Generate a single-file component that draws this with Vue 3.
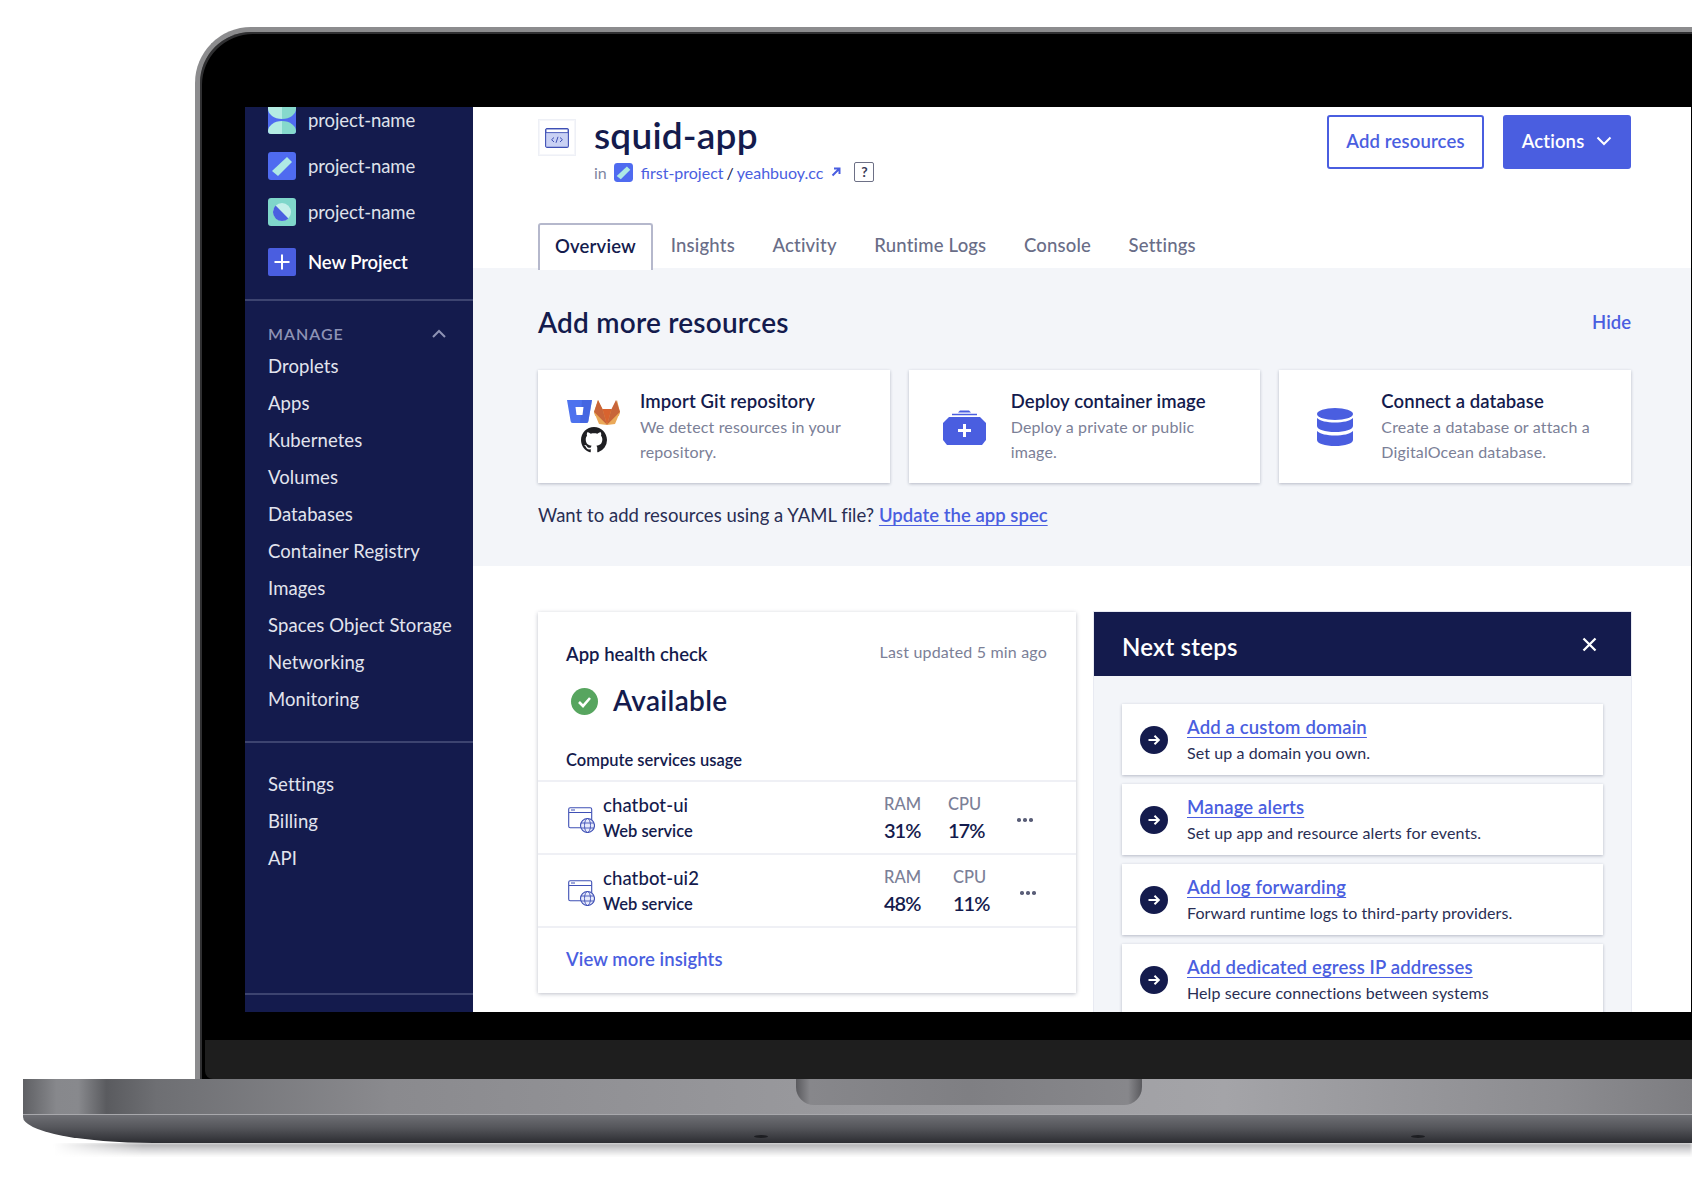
<script setup>
const manage = ['Droplets','Apps','Kubernetes','Volumes','Databases','Container Registry','Images','Spaces Object Storage','Networking','Monitoring']
const account = ['Settings','Billing','API']
const tabs = ['Insights','Activity','Runtime Logs','Console','Settings']
const services = [
  { name:'chatbot-ui', ram:'31%', cpu:'17%', cpuGap:'cpu-a' },
  { name:'chatbot-ui2', ram:'48%', cpu:'11%', cpuGap:'cpu-b' }
]
const steps = [
  { t:'Add a custom domain', d:'Set up a domain you own.' },
  { t:'Manage alerts', d:'Set up app and resource alerts for events.' },
  { t:'Add log forwarding', d:'Forward runtime logs to third-party providers.' },
  { t:'Add dedicated egress IP addresses', d:'Help secure connections between systems' }
]
const github = 'M8 0C3.58 0 0 3.58 0 8c0 3.54 2.29 6.53 5.47 7.59.4.07.55-.17.55-.38 0-.19-.01-.82-.01-1.49-2.01.37-2.53-.49-2.69-.94-.09-.23-.48-.94-.82-1.13-.28-.15-.68-.52-.01-.53.63-.01 1.08.58 1.23.82.72 1.21 1.87.87 2.33.66.07-.52.28-.87.51-1.07-1.78-.2-3.64-.89-3.64-3.95 0-.87.31-1.59.82-2.15-.08-.2-.36-1.02.08-2.12 0 0 .67-.21 2.2.82.64-.18 1.32-.27 2-.27.68 0 1.36.09 2 .27 1.53-1.04 2.2-.82 2.2-.82.44 1.1.16 1.92.08 2.12.51.56.82 1.27.82 2.15 0 3.07-1.87 3.75-3.65 3.95.29.25.54.73.54 1.48 0 1.07-.01 1.93-.01 2.2 0 .21.15.46.55.38A8.013 8.013 0 0016 8c0-4.42-3.58-8-8-8z'
</script>

<template>
  <div class="page">
    <div class="lid">
      <div class="bezel">
        <div class="screen">
          <aside class="sidebar">
            <div class="projects">
              <div class="project">
                <svg class="picon" viewBox="0 0 28 28">
                  <rect width="28" height="28" rx="3" fill="#4f6bf0"/>
                  <path d="M0 0h14v13C6 13 0 8 0 3z" fill="#b4ece3"/>
                  <path d="M14 0h14v3c0 5-6 10-14 10z" fill="#86d9cc"/>
                  <path d="M14 15C6 15 0 20 0 25c0 2 1 3 3 3h11z" fill="#b4ece3"/>
                  <path d="M14 15c8 0 14 5 14 10 0 2-1 3-3 3H14z" fill="#86d9cc"/>
                </svg>
                <span>project-name</span>
              </div>
              <div class="project">
                <svg class="picon" viewBox="0 0 28 28">
                  <rect width="28" height="28" rx="3" fill="#4f6bf0"/>
                  <path d="M19 5l5 5L10 24l-6-5z" fill="#aeeae4"/>
                </svg>
                <span>project-name</span>
              </div>
              <div class="project">
                <svg class="picon" viewBox="0 0 28 28">
                  <rect width="28" height="28" rx="3" fill="#7fd6ca"/>
                  <circle cx="14" cy="14" r="9" fill="#c4efe9"/>
                  <path d="M7.600 7.600A9 9 0 0 0 20.400 20.400z" fill="#4a5fe0"/>
                </svg>
                <span>project-name</span>
              </div>
              <div class="project newp">
                <svg class="picon" viewBox="0 0 28 28">
                  <rect width="28" height="28" rx="2" fill="#4a5ee0"/>
                  <path d="M14 6.5v15M6.5 14h15" stroke="#fff" stroke-width="2"/>
                </svg>
                <span>New Project</span>
              </div>
            </div>
            <div class="sect manage">
              <div class="sect-head">
                <span>MANAGE</span>
                <svg width="16" height="10" viewBox="0 0 16 10"><path d="M2 8l6-6 6 6" fill="none" stroke="#8e93b5" stroke-width="2"/></svg>
              </div>
              <a v-for="m in manage" :key="m" class="nav">{{ m }}</a>
            </div>
            <div class="sect account">
              <a v-for="m in account" :key="m" class="nav">{{ m }}</a>
            </div>
            <div class="sect last"></div>
          </aside>

          <main class="main">
            <section class="top">
              <div class="headrow">
                <div class="appicon">
                  <svg width="24" height="20" viewBox="0 0 24 20">
                    <rect x=".6" y=".6" width="22.8" height="18.8" rx="1.5" fill="#c9d1f4" stroke="#3f50b5" stroke-width="1.1"/>
                    <path d="M1 1h22v3.6H1z" fill="#fff" stroke="#3f50b5" stroke-width=".9"/>
                    <path d="M9 9.5l-2.4 2.2L9 14M15 9.5l2.4 2.2L15 14M13 8.8l-2 6" fill="none" stroke="#3f50b5" stroke-width="1"/>
                  </svg>
                </div>
                <div class="titlewrap">
                  <h1>squid-app</h1>
                  <div class="crumb">
                    <span class="in">in</span>
                    <svg class="mini" viewBox="0 0 28 28">
                      <rect width="28" height="28" rx="5" fill="#4f6bf0"/>
                      <path d="M19 5l5 5L10 24l-6-5z" fill="#aeeae4"/>
                    </svg>
                    <a>first-project</a><span class="sl">/</span><a>yeahbuoy.cc</a>
                    <svg class="ext" width="10" height="10" viewBox="0 0 10 10"><path d="M1.5 8.5L8 2M3 1.5h5.5V7" fill="none" stroke="#4a5ee0" stroke-width="2"/></svg>
                    <span class="help">?</span>
                  </div>
                </div>
                <div class="btns">
                  <button class="btn ghost">Add resources</button>
                  <button class="btn solid">Actions
                    <svg width="16" height="10" viewBox="0 0 16 10"><path d="M1.5 1.5L8 8l6.500-6.500" fill="none" stroke="#fff" stroke-width="2"/></svg>
                  </button>
                </div>
              </div>
              <nav class="tabs">
                <span class="tab active">Overview</span>
                <span v-for="t in tabs" :key="t" class="tab">{{ t }}</span>
              </nav>
            </section>

            <section class="more">
              <div class="more-head">
                <h2>Add more resources</h2>
                <a class="hide">Hide</a>
              </div>
              <div class="rescards">
                <div class="rescard">
                  <div class="resicon git">
                    <div class="gitrow">
                      <svg width="25" height="23" viewBox="0 0 25 23">
                        <path d="M0 0h25l-3.6 21a2 2 0 0 1-2 2H5.6a2 2 0 0 1-2-2z" fill="#4d72ee"/>
                        <path d="M25 0H15l-2 23h6.4a2 2 0 0 0 2-2z" fill="#3f5fd8" opacity=".6"/>
                        <path d="M8.5 7h8l-1 8h-6z" fill="#fff"/>
                      </svg>
                      <svg width="26" height="25" viewBox="0 0 26 25">
                        <path d="M13 25L1 15.5 0 12 4 0l4.500 9h10L23 0l3 12-1 3.500z" fill="#e2a055"/>
                        <path d="M13 25L8.500 9h9z" fill="#d8632f"/>
                        <path d="M13 25L0 12 4 0l4.500 9zM13 25l13-13L22 0l-4.500 9z" fill="#c8653a"/>
                        <path d="M0 12l13 13-8-1zM26 12L13 25l8-1z" fill="#eaa959"/>
                      </svg>
                    </div>
                    <svg class="gh" width="26" height="26" viewBox="0 0 16 16"><path :d="github" fill="#1f1f23"/></svg>
                  </div>
                  <div class="restext">
                    <h3>Import Git repository</h3>
                    <p>We detect resources in your repository.</p>
                  </div>
                </div>
                <div class="rescard">
                  <div class="resicon shifted">
                    <svg width="43" height="36" viewBox="0 0 43 36">
                      <path d="M17 1.500h9l2 2H15z" fill="#4a5ee0"/>
                      <path d="M9 5.500h25" stroke="#4a5ee0" stroke-width="1.500"/>
                      <path d="M6 8h31l6 6v17l-4 5H4l-4-5V14z" fill="#4a5ee0"/>
                      <path d="M21.500 15v13M15 21.500h13" stroke="#fff" stroke-width="3"/>
                    </svg>
                  </div>
                  <div class="restext">
                    <h3>Deploy container image</h3>
                    <p>Deploy a private or public image.</p>
                  </div>
                </div>
                <div class="rescard">
                  <div class="resicon shifted">
                    <svg width="36" height="38" viewBox="0 0 36 38">
                      <ellipse cx="18" cy="6" rx="18" ry="6" fill="#4a5ee0"/>
                      <path d="M0 10c3 3 10 4.500 18 4.500S33 13 36 10v8c0 3.500-8 6-18 6S0 21.500 0 18z" fill="#4a5ee0"/>
                      <path d="M0 23c3 3 10 4.500 18 4.500S33 26 36 23v9c0 3.500-8 6-18 6S0 35.500 0 32z" fill="#4a5ee0"/>
                    </svg>
                  </div>
                  <div class="restext">
                    <h3>Connect a database</h3>
                    <p>Create a database or attach a DigitalOcean database.</p>
                  </div>
                </div>
              </div>
              <p class="yaml">Want to add resources using a YAML file? <a>Update the app spec</a></p>
            </section>

            <section class="lower">
              <div class="health">
                <div class="health-head">
                  <strong>App health check</strong>
                  <span>Last updated 5 min ago</span>
                </div>
                <div class="avail">
                  <svg width="27" height="27" viewBox="0 0 27 27">
                    <circle cx="13.500" cy="13.500" r="13.500" fill="#57a55f"/>
                    <path d="M8 14l4 4 7-8" fill="none" stroke="#fff" stroke-width="2.600"/>
                  </svg>
                  <span>Available</span>
                </div>
                <div class="usage">Compute services usage</div>
                <div v-for="s in services" :key="s.name" class="svc">
                  <svg class="svcicon" width="27" height="26" viewBox="0 0 27 26">
                    <rect x=".7" y=".7" width="23" height="20" rx="1.500" fill="none" stroke="#3f50b5" stroke-width="1.100"/>
                    <path d="M1 5.500h22.500" stroke="#3f50b5" stroke-width="1"/>
                    <path d="M3 3h4" stroke="#3f50b5" stroke-width="1"/>
                    <circle cx="19.500" cy="18.500" r="7" fill="#e6e9fb" stroke="#3f50b5" stroke-width="1.100"/>
                    <ellipse cx="19.500" cy="18.500" rx="3" ry="7" fill="none" stroke="#3f50b5" stroke-width=".9"/>
                    <path d="M13 16h13M13 21h13" stroke="#3f50b5" stroke-width=".9"/>
                  </svg>
                  <div class="svcname">
                    <div class="n">{{ s.name }}</div>
                    <div class="w">Web service</div>
                  </div>
                  <div class="metric ram"><span>RAM</span><b>{{ s.ram }}</b></div>
                  <div class="metric" :class="s.cpuGap"><span>CPU</span><b>{{ s.cpu }}</b></div>
                  <div class="dots" :class="s.cpuGap"><i></i><i></i><i></i></div>
                </div>
                <div class="insights"><a>View more insights</a></div>
              </div>

              <div class="next">
                <div class="next-head">
                  <span>Next steps</span>
                  <svg width="15" height="15" viewBox="0 0 15 15"><path d="M1.500 1.500l12 12M13.500 1.500l-12 12" stroke="#fff" stroke-width="2.300"/></svg>
                </div>
                <div class="next-body">
                  <div v-for="s in steps" :key="s.t" class="step">
                    <svg class="arrow" width="28" height="28" viewBox="0 0 28 28">
                      <circle cx="14" cy="14" r="14" fill="#141b4d"/>
                      <path d="M8.500 14h10M14.500 9.800l4.300 4.200-4.300 4.200" fill="none" stroke="#fff" stroke-width="2"/>
                    </svg>
                    <div>
                      <a class="st">{{ s.t }}</a>
                      <div class="sd">{{ s.d }}</div>
                    </div>
                  </div>
                </div>
              </div>
            </section>
          </main>
        </div>
      </div>
      <div class="chin"></div>
    </div>
    <div class="base">
      <div class="plate"><div class="notch"></div></div>
      <div class="lip"><i class="port p1"></i><i class="port p2"></i></div>
      <div class="shadow"></div>
    </div>
  </div>
</template>

<style>
html, body { margin: 0; background: #fff; }
</style>

<style scoped>
.page {
  width: 1692px; height: 1186px; overflow: hidden; background: #fff;
  padding-top: 27px; box-sizing: border-box;
  font-family: "Lato", "Liberation Sans", sans-serif; color: #141b4d;
}
a { color: #4a5ee0; }
h1, h2, h3, p { margin: 0; }

.lid {
  margin-left: 195px; width: 1497px; height: 1052px; box-sizing: border-box;
  background: #000; border-left: 5px solid #8c8c8e; border-top: 5px solid #8c8c8e;
  border-top-left-radius: 56px; overflow: hidden;
  display: flex; flex-direction: column;
  box-shadow: inset 2px 2px 0 #303032;
}
.bezel { padding: 75px 0 28px 45px; }
.screen { width: 1446px; height: 905px; background: #fff; display: flex; overflow: hidden; }
.chin { height: 39px; background: #1e1e1e; margin-left: 5px; border-bottom-left-radius: 8px; }

.sidebar { width: 228px; flex: none; background: #141b4d; color: #fff; display: flex; flex-direction: column; }
.projects { padding: 0 0 22px 23px; height: 170px; box-sizing: content-box; border-bottom: 2px solid #3d4470; }
.project { display: flex; align-items: center; gap: 12px; height: 28px; margin-bottom: 18px; font-size: 18.500px; color: #dfe1ea; letter-spacing: -.1px; }
.project:first-child { margin-top: -1px; }
.project.newp { margin-top: 22px; margin-bottom: 0; color: #fff; font-weight: 600; }
.picon { width: 28px; height: 28px; flex: none; }
.sect { padding-left: 23px; border-bottom: 2px solid #3d4470; }
.manage { padding-top: 24px; padding-bottom: 23px; }
.sect-head { display: flex; justify-content: space-between; align-items: center; height: 17px; padding-right: 26px; font-size: 16px; font-weight: 600; letter-spacing: 1px; color: #8e93b5; margin-bottom: 6px; }
.nav { display: block; height: 37px; line-height: 37px; color: #e2e4ee; font-size: 18.500px; letter-spacing: .1px; }
.account { padding-top: 23px; padding-bottom: 116px; }
.account .nav { height: 37px; }
.last { flex: 1; border: 0; }

.main { flex: 1; min-width: 0; height: 905px; overflow: hidden; }
.top { padding: 0 60px 0 65px; height: 161px; box-sizing: border-box; }
.headrow { display: flex; height: 116px; }
.appicon { margin-top: 12px; width: 38px; height: 37px; box-sizing: border-box; border: 1px solid #eef0f6; display: flex; align-items: center; justify-content: center; box-shadow: 0 0 0 1px #f5f6fa inset; }
.titlewrap { margin-left: 18px; }
h1 { font-size: 37px; font-weight: 600; line-height: 44px; margin-top: 6px; letter-spacing: .2px; }
.crumb { display: flex; align-items: center; font-size: 16px; color: #80859f; margin-top: 1px; height: 28px; }
.crumb a { color: #4a5ee0; }
.mini { width: 19px; height: 19px; margin: 0 8px 0 7px; }
.sl { margin: 0 3px; color: #141b4d; }
.ext { margin-left: 8px; }
.help { margin-left: 13px; width: 20px; height: 20px; box-sizing: border-box; border: 1.500px solid #6d7086; border-radius: 2px; color: #3a3d58; font-weight: 700; font-size: 14px; line-height: 17px; text-align: center; }
.btns { margin-left: auto; display: flex; gap: 19px; padding-top: 8px; height: 54px; }
.btn { font: 600 18.500px "Lato", sans-serif; border-radius: 3px; height: 54px; letter-spacing: .15px; box-sizing: border-box; padding-bottom: 3px; }
.ghost { width: 157px; background: #fff; color: #4a5ee0; border: 2px solid #4a5ee0; }
.solid { width: 128px; background: #4a5ee0; color: #fff; border: 0; display: flex; align-items: center; justify-content: center; gap: 12px; }
.tabs { display: flex; height: 45px; border-bottom: 2px solid #b5b8cc; box-sizing: content-box; }
.tab { padding: 0 18.800px; font-size: 18.500px; line-height: 45px; color: #696d87; letter-spacing: .18px; font-weight: 500; }
.tab.active { color: #141b4d; font-weight: 600; background: #fff; box-sizing: border-box; width: 115px; height: 47px; padding: 0; text-align: center; border: 2px solid #b5b8cc; border-bottom: 0; border-radius: 3px 3px 0 0; margin-right: -1px; line-height: 43px; }

.more { background: #f3f5f9; height: 298px; padding: 0 60px 0 65px; box-sizing: border-box; }
.more-head { display: flex; justify-content: space-between; align-items: center; height: 102px; padding-top: 6px; box-sizing: border-box; }
h2 { font-size: 28px; font-weight: 600; letter-spacing: .2px; }
.hide { font-size: 18.500px; font-weight: 600; }
.rescards { display: flex; gap: 19px; }
.rescard { flex: 1; height: 113px; background: #fff; box-shadow: 0 1px 3px rgba(40,45,80,.3); display: flex; }
.resicon { width: 102px; flex: none; display: flex; align-items: center; justify-content: center; flex-direction: column; }
.resicon.shifted { padding-left: 10px; box-sizing: border-box; }
.resicon.git { align-items: flex-start; padding-left: 29px; box-sizing: border-box; }
.gitrow { display: flex; gap: 2px; }
.gh { margin: 2px 0 0 14px; }
.restext { padding: 19px 20px 0 0; }
h3 { font-size: 18.500px; font-weight: 600; line-height: 24px; letter-spacing: .1px; }
.restext p { font-size: 16px; line-height: 24.500px; color: #7b8097; margin-top: 2px; letter-spacing: .15px; }
.yaml { font-size: 18.500px; margin-top: 19px; color: #292e54; letter-spacing: .03px; line-height: 26px; }
.yaml a { font-weight: 600; text-decoration: underline; text-underline-offset: 3px; text-decoration-thickness: 1px; }

.lower { display: flex; gap: 18px; padding: 46px 60px 0 65px; }
.health { width: 538px; height: 381px; flex: none; background: #fff; box-shadow: 0 1px 4px rgba(40,45,80,.3); }
.health-head { display: flex; justify-content: space-between; padding: 30px 29px 0 28px; align-items: center; height: 24px; }
.health-head strong { font-size: 18.500px; font-weight: 600; }
.health-head span { font-size: 16px; color: #7b8097; letter-spacing: .18px; margin-top: -5px; }
.avail { display: flex; align-items: center; gap: 15px; padding-left: 33px; margin-top: 14px; height: 40px; font-size: 28px; font-weight: 600; letter-spacing: .3px; }
.avail svg { margin-top: 2px; }
.usage { padding-left: 28px; margin-top: 28px; height: 32px; font-size: 16.500px; font-weight: 600; line-height: 24px; box-sizing: border-box; }
.svc { display: flex; height: 73px; border-top: 2px solid #eff0f5; box-sizing: border-box; align-items: center; padding-left: 30px; position: relative; }
.svc:last-of-type { height: 74px; }
.svcicon { flex: none; margin: 4px 8px 0 0; }
.svcname { width: 281px; flex: none; }
.n { font-size: 18.500px; font-weight: 500; line-height: 24px; margin-bottom: 3px; letter-spacing: .1px; }
.w { font-size: 16.500px; font-weight: 600; line-height: 22px; }
.metric { display: flex; flex-direction: column; }
.metric span { font-size: 16.500px; color: #7b8097; line-height: 24px; font-weight: 500; }
.metric b { font-size: 20px; line-height: 28px; font-weight: 600; letter-spacing: -1px; }
.ram { width: 64px; }
.cpu-b.metric { margin-left: 5px; }
.metric.cpu-a, .metric.cpu-b { width: 36px; }
.dots { display: flex; gap: 2.500px; margin: 5px 0 0 33px; }
.dots.cpu-b { margin-left: 31px; }
.dots i { width: 3.500px; height: 3.500px; border-radius: 50%; background: #5a5e78; }
.insights { border-top: 2px solid #eff0f5; height: 66px; padding-left: 28px; display: flex; align-items: center; font-size: 18.500px; font-weight: 600; padding-bottom: 2px; box-sizing: border-box; letter-spacing: .08px; }

.next { flex: 1; background: #f3f5f9; box-shadow: 0 0 0 1px #e8eaf2; height: 420px; }
.next-head { height: 64px; background: #141b4d; color: #fff; display: flex; align-items: center; justify-content: space-between; padding: 4px 34px 0 28px; box-sizing: border-box; font-size: 24px; font-weight: 600; letter-spacing: .2px; }
.next-head svg { margin-top: -4px; }
.next-body { padding: 28px 28px 0; display: flex; flex-direction: column; gap: 9px; }
.step { height: 71px; flex: none; background: #fff; box-shadow: 0 1px 3px rgba(40,45,80,.3); display: flex; align-items: center; padding-left: 18px; gap: 19px; }
.arrow { flex: none; }
.st { font-size: 18.500px; font-weight: 600; text-decoration: underline; text-underline-offset: 3px; text-decoration-thickness: 1px; line-height: 24px; display: inline-block; letter-spacing: .15px; }
.sd { font-size: 16px; color: #292e54; line-height: 22px; margin-top: 3px; letter-spacing: .1px; }

.base { margin-left: 23px; width: 1669px; position: relative; }
.plate {
  height: 36px;
  background: linear-gradient(90deg, #5f6064 0, #87888c 2%, #88898d 3.300%, #5a5b5f 5%, #6e6f73 8%, #8a8a8e 22%, #9a9a9e 50%, #a4a4a8 72%, #8c8c90 92%, #7d7d81 100%);
  box-shadow: inset 0 -1px 0 #a8a8ac;
}
.notch {
  margin-left: 773px; width: 346px; height: 26px;
  border-radius: 0 0 18px 18px;
  background: linear-gradient(90deg, #5a5a5e 0, #87878b 4%, #7f7f83 50%, #87878b 96%, #5a5a5e 100%);
}
.lip {
  height: 28px; position: relative;
  background: linear-gradient(180deg, #6e6f74 0, #55565b 45%, #2c2d32 100%);
  border-bottom-left-radius: 130px 26px;
}
.port { position: absolute; top: 20px; width: 14px; height: 3px; border-radius: 50%; background: #1d1e22; }
.p1 { left: 731px; }
.p2 { left: 1388px; }
.shadow {
  margin-left: 30px; height: 14px;
  background: linear-gradient(180deg, #a6a6a8 0, #d4d4d6 45%, #fff 100%);
  filter: blur(1.500px);
  mask-image: linear-gradient(90deg, transparent 0, #000 90px);
}
</style>
